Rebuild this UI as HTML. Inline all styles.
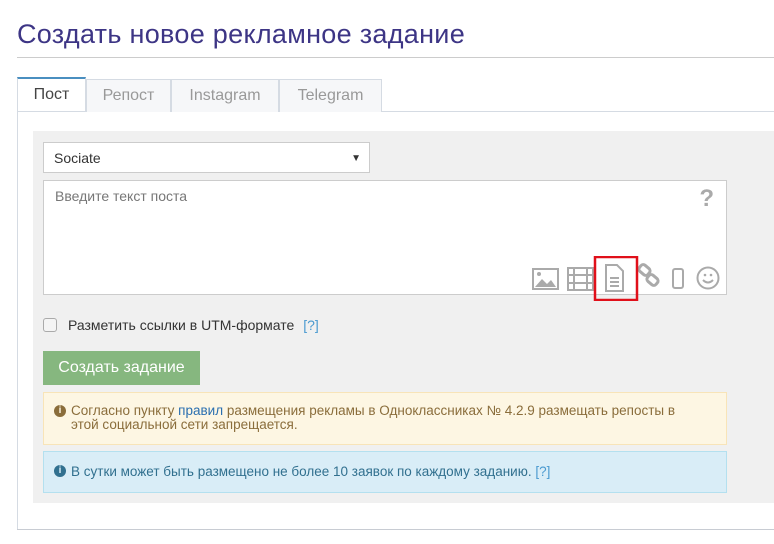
<!DOCTYPE html>
<html><head><meta charset="utf-8"><style>
*{box-sizing:border-box;margin:0;padding:0}
body{width:774px;height:544px;background:#fff;font-family:"Liberation Sans",sans-serif;position:relative;overflow:hidden;color:#555}
.a{position:absolute}
h1{position:absolute;left:17px;top:19px;font-weight:normal;font-size:27px;color:#3d3585;letter-spacing:0.3px}
.tab{position:absolute;top:79px;height:33px;border:1px solid #d5dbe3;border-bottom:none;background:#f6f7f9;color:#999;font-size:16px;text-align:center;line-height:32px}
</style></head><body>
<h1>Создать новое рекламное задание</h1>
<div class="a" style="left:17px;top:57px;width:757px;height:1px;background:#ccc"></div>
<div class="a" style="left:17px;top:111px;width:757px;height:1px;background:#d5dbe3"></div>
<div class="a" style="left:17px;top:111px;width:1px;height:419px;background:#d5dbe3"></div>
<div class="a" style="left:17px;top:529px;width:757px;height:1px;background:#c8ccd3"></div>
<div class="tab" style="left:17px;width:69px;background:#fff;border-top:2px solid #4a8fc0;color:#444;height:34px;top:77px">Пост</div>
<div class="tab" style="left:86px;width:85px">Репост</div>
<div class="tab" style="left:171px;width:108px">Instagram</div>
<div class="tab" style="left:279px;width:103px">Telegram</div>
<div class="a" style="left:33px;top:131px;width:741px;height:372px;background:#f0f0f0"></div>
<div class="a" style="left:43px;top:142px;width:327px;height:31px;background:#fff;border:1px solid #ccc;font-size:14px;color:#333;padding:7px 10px">Sociate<span style="position:absolute;right:8px;top:10px;font-size:10px">▼</span></div>
<div class="a" style="left:43px;top:180px;width:684px;height:115px;background:#fff;border:1px solid #ccc;font-size:14px;color:#777;padding:7px 11px">Введите текст поста
<span style="position:absolute;right:12px;top:4px;font-size:24px;color:#aaa;font-weight:bold">?</span></div>
<svg class="a" style="left:530px;top:256px" width="195" height="45" viewBox="0 -2 195 45">
<g fill="none" stroke="#aaa" stroke-width="2">
<rect x="3" y="11" width="25" height="20"/>
<rect x="38" y="10" width="25" height="22"/><line x1="44" y1="10" x2="44" y2="32"/><line x1="57" y1="10" x2="57" y2="32"/><line x1="38" y1="17" x2="63" y2="17"/><line x1="38" y1="25" x2="63" y2="25"/>
<path d="M76 7h11l6 6v20h-17z"/><line x1="80" y1="20" x2="89" y2="20"/><line x1="80" y1="24" x2="89" y2="24"/><line x1="80" y1="28" x2="89" y2="28"/>
<rect x="109" y="8" width="11" height="8" rx="3" transform="rotate(40 114.5 12)" stroke-width="3"/><rect x="117" y="18" width="11" height="8" rx="3" transform="rotate(40 122.5 22)" stroke-width="3"/>
<rect x="143" y="11" width="10" height="19" rx="2"/>
<circle cx="178" cy="20" r="10.5"/><path d="M173 22q5 5 10 0"/>
</g>
<g fill="#aaa"><path d="M5 29l7-8 5 5 4-4 5 7z"/><circle cx="9" cy="16" r="2"/><circle cx="175" cy="17" r="1.3"/><circle cx="181" cy="17" r="1.3"/></g>
<rect x="65" y="-1" width="42" height="43" fill="none" stroke="#e0101a" stroke-width="2.5"/>
</svg>
<div class="a" style="left:43px;top:318px;width:14px;height:14px;border:1px solid #aaa;border-radius:3px;background:#f4f4f4"></div>
<div class="a" style="left:68px;top:317px;font-size:14px;color:#333">Разметить ссылки в UTM-формате <span style="color:#4a9ad0;margin-left:5px">[?]</span></div>
<div class="a" style="left:43px;top:351px;width:157px;height:34px;background:#86b77f;color:#fff;font-size:16px;text-align:center;line-height:34px">Создать задание</div>
<div class="a" style="left:43px;top:392px;width:684px;height:53px;background:#fdf6e3;border:1px solid #f8e4b8;color:#8a6d3b;font-size:13.5px;line-height:14px;padding:11px 34px 0 27px">Согласно пункту <span style="color:#2a6fb0">правил</span> размещения рекламы в Одноклассниках № 4.2.9 размещать репосты в этой социальной сети запрещается.<span style="position:absolute;left:10px;top:12px;width:12px;height:12px;border-radius:50%;background:#8a6d3b;color:#fdf6e3;font-size:10px;font-weight:bold;text-align:center;line-height:12px">i</span></div>
<div class="a" style="left:43px;top:451px;width:684px;height:42px;background:#d9edf7;border:1px solid #b4e0ef;color:#31708f;font-size:13.5px;padding:12px 10px 0 27px">В сутки может быть размещено не более 10 заявок по каждому заданию. <span style="color:#4a9ad0">[?]</span><span style="position:absolute;left:10px;top:13px;width:12px;height:12px;border-radius:50%;background:#31708f;color:#d9edf7;font-size:10px;font-weight:bold;text-align:center;line-height:12px">i</span></div>
</body></html>
